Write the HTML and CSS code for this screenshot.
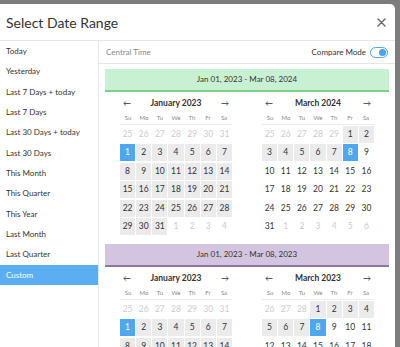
FILE: index.html
```html
<!DOCTYPE html>
<html>
<head>
  <meta charset="utf-8">
  <link rel="stylesheet" href="styles.css">
</head>
<body>
  <div class="modal">
    <div class="modal-header">
      <div class="modal-title">Select Date Range</div>
      <button class="close-btn">
        <svg width="9" height="9" viewBox="0 0 9 9"><path d="M1 1 L8 8 M8 1 L1 8" stroke="#666" stroke-width="1.4" stroke-linecap="round"/></svg>
      </button>
    </div>

    <div class="modal-body">
      <ul class="presets">
        <li>Today</li>
        <li>Yesterday</li>
        <li>Last 7 Days + today</li>
        <li>Last 7 Days</li>
        <li>Last 30 Days + today</li>
        <li>Last 30 Days</li>
        <li>This Month</li>
        <li>This Quarter</li>
        <li>This Year</li>
        <li>Last Month</li>
        <li>Last Quarter</li>
        <li class="active">Custom</li>
      </ul>

      <div class="main">
        <div class="toolbar">
          <span class="timezone">Central Time</span>
          <label class="compare">Compare Mode <span class="switch on"><span class="knob"></span></span></label>
        </div>

        <div class="ranges">
          <div class="range">
            <div class="range-label green">Jan 01, 2023 - Mar 08, 2024</div>
            <div class="months">
              <div class="month">
                <div class="month-nav"><span class="arrow">&larr;</span><span class="month-name">January 2023</span><span class="arrow">&rarr;</span></div>
                <div class="weekdays"><span>Su</span><span>Mo</span><span>Tu</span><span>We</span><span>Th</span><span>Fr</span><span>Sa</span></div>
                <div class="days">
                  <span class="out">25</span><span class="out">26</span><span class="out">27</span><span class="out">28</span><span class="out">29</span><span class="out">30</span><span class="out">31</span>
                  <span class="sel">1</span><span class="in">2</span><span class="in">3</span><span class="in">4</span><span class="in">5</span><span class="in">6</span><span class="in">7</span>
                  <span class="in">8</span><span class="in">9</span><span class="in">10</span><span class="in">11</span><span class="in">12</span><span class="in">13</span><span class="in">14</span>
                  <span class="in">15</span><span class="in">16</span><span class="in">17</span><span class="in">18</span><span class="in">19</span><span class="in">20</span><span class="in">21</span>
                  <span class="in">22</span><span class="in">23</span><span class="in">24</span><span class="in">25</span><span class="in">26</span><span class="in">27</span><span class="in">28</span>
                  <span class="in">29</span><span class="in">30</span><span class="in">31</span><span class="out">1</span><span class="out">2</span><span class="out">3</span><span class="out">4</span>
                </div>
              </div>
              <div class="month">
                <div class="month-nav"><span class="arrow">&larr;</span><span class="month-name">March 2024</span><span class="arrow">&rarr;</span></div>
                <div class="weekdays"><span>Su</span><span>Mo</span><span>Tu</span><span>We</span><span>Th</span><span>Fr</span><span>Sa</span></div>
                <div class="days">
                  <span class="out">25</span><span class="out">26</span><span class="out">27</span><span class="out">28</span><span class="out">29</span><span class="in">1</span><span class="in">2</span>
                  <span class="in">3</span><span class="in">4</span><span class="in">5</span><span class="in">6</span><span class="in">7</span><span class="sel">8</span><span>9</span>
                  <span>10</span><span>11</span><span>12</span><span>13</span><span>14</span><span>15</span><span>16</span>
                  <span>17</span><span>18</span><span>19</span><span>20</span><span>21</span><span>22</span><span>23</span>
                  <span>24</span><span>25</span><span>26</span><span>27</span><span>28</span><span>29</span><span>30</span>
                  <span>31</span><span class="out">1</span><span class="out">2</span><span class="out">3</span><span class="out">4</span><span class="out">5</span><span class="out">6</span>
                </div>
              </div>
            </div>
          </div>

          <div class="range">
            <div class="range-label purple">Jan 01, 2023 - Mar 08, 2023</div>
            <div class="months">
              <div class="month">
                <div class="month-nav"><span class="arrow">&larr;</span><span class="month-name">January 2023</span><span class="arrow">&rarr;</span></div>
                <div class="weekdays"><span>Su</span><span>Mo</span><span>Tu</span><span>We</span><span>Th</span><span>Fr</span><span>Sa</span></div>
                <div class="days">
                  <span class="out">25</span><span class="out">26</span><span class="out">27</span><span class="out">28</span><span class="out">29</span><span class="out">30</span><span class="out">31</span>
                  <span class="sel">1</span><span class="in">2</span><span class="in">3</span><span class="in">4</span><span class="in">5</span><span class="in">6</span><span class="in">7</span>
                  <span class="in">8</span><span class="in">9</span><span class="in">10</span><span class="in">11</span><span class="in">12</span><span class="in">13</span><span class="in">14</span>
                </div>
              </div>
              <div class="month">
                <div class="month-nav"><span class="arrow">&larr;</span><span class="month-name">March 2023</span><span class="arrow">&rarr;</span></div>
                <div class="weekdays"><span>Su</span><span>Mo</span><span>Tu</span><span>We</span><span>Th</span><span>Fr</span><span>Sa</span></div>
                <div class="days">
                  <span class="out">26</span><span class="out">27</span><span class="out">28</span><span class="in">1</span><span class="in">2</span><span class="in">3</span><span class="in">4</span>
                  <span class="in">5</span><span class="in">6</span><span class="in">7</span><span class="sel">8</span><span>9</span><span>10</span><span>11</span>
                  <span>12</span><span>13</span><span>14</span><span>15</span><span>16</span><span>17</span><span>18</span>
                </div>
              </div>
            </div>
          </div>
        </div>
      </div>
    </div>
  </div>
</body>
</html>
```

FILE: styles.css
```css
body {
  margin: 0;
  height: 347px;
  overflow: hidden;
  background: #7d7d7d;
  font-family: 'Lato', 'Noto Sans', sans-serif;
  color: #333;
}

.modal {
  margin-top: 4px;
  width: 395px;
  height: 400px;
  background: white;
  border-radius: 0 5px 0 0;
  overflow: hidden;
}

.modal-header {
  display: flex;
  align-items: center;
  justify-content: space-between;
  height: 36px;
  padding: 0 9px 0 6px;
  border-bottom: 1px solid #e6e6e6;
}

.modal-title {
  font-size: 14px;
  color: #333;
}

.close-btn {
  background: none;
  border: none;
  padding: 0;
  display: flex;
  cursor: pointer;
}

.modal-body {
  display: flex;
}

.presets {
  list-style: none;
  margin: 0;
  padding: 0;
  width: 99px;
  border-right: 1px solid #e6e6e6;
  height: 360px;
}

.presets li {
  height: 20.35px;
  line-height: 20.35px;
  padding-left: 6px;
  font-size: 8px;
  color: #333;
}

.presets li.active {
  background: #5aaef1;
  color: white;
}

.main {
  flex: 1;
}

.toolbar {
  display: flex;
  align-items: center;
  justify-content: space-between;
  height: 22px;
  padding: 0 7px;
  border-bottom: 1px solid #e6e6e6;
  font-size: 8px;
}

.timezone {
  color: #888;
}

.compare {
  display: flex;
  align-items: center;
  gap: 4px;
  color: #333;
}

.switch {
  box-sizing: border-box;
  width: 18px;
  height: 11px;
  border: 1.5px solid #4aa3ee;
  border-radius: 6px;
  display: flex;
  align-items: center;
  justify-content: flex-end;
  padding: 0 1px;
}

.knob {
  width: 7px;
  height: 7px;
  border-radius: 50%;
  background: #4aa3ee;
}

.ranges {
  padding: 5px 6px 0;
}

.range-label {
  height: 21px;
  line-height: 21px;
  text-align: center;
  font-size: 8px;
  color: #333;
}

.range-label.green {
  background: #c8f1d3;
  border-bottom: 2px solid #7bd087;
}

.range-label.purple {
  background: #d3c5df;
  border-bottom: 2px solid #8e73a6;
}

.months {
  display: flex;
  gap: 30px;
  padding: 3px 15px 9px;
}

.month {
  width: 112px;
}

.month-nav {
  display: flex;
  align-items: center;
  justify-content: space-between;
  height: 15px;
  padding: 0 3px;
}

.arrow {
  font-size: 8px;
  color: #333;
}

.month-name {
  font-size: 8.5px;
  font-weight: 700;
  color: #333;
}

.weekdays {
  display: grid;
  grid-template-columns: repeat(7, 1fr);
  height: 14px;
  align-items: center;
  border-bottom: 1px solid #ececec;
  font-size: 6px;
  color: #888;
  text-align: center;
}

.days {
  display: grid;
  grid-template-columns: repeat(7, 1fr);
  column-gap: 1px;
  row-gap: 1.5px;
  margin-top: 0.5px;
}

.days span {
  height: 17px;
  line-height: 17px;
  text-align: center;
  font-size: 8.5px;
  color: #333;
}

.days span.out {
  color: #ccc;
}

.days span.in {
  background: #ebebeb;
}

.days span.sel {
  background: #4ea8ef;
  color: white;
}
```
